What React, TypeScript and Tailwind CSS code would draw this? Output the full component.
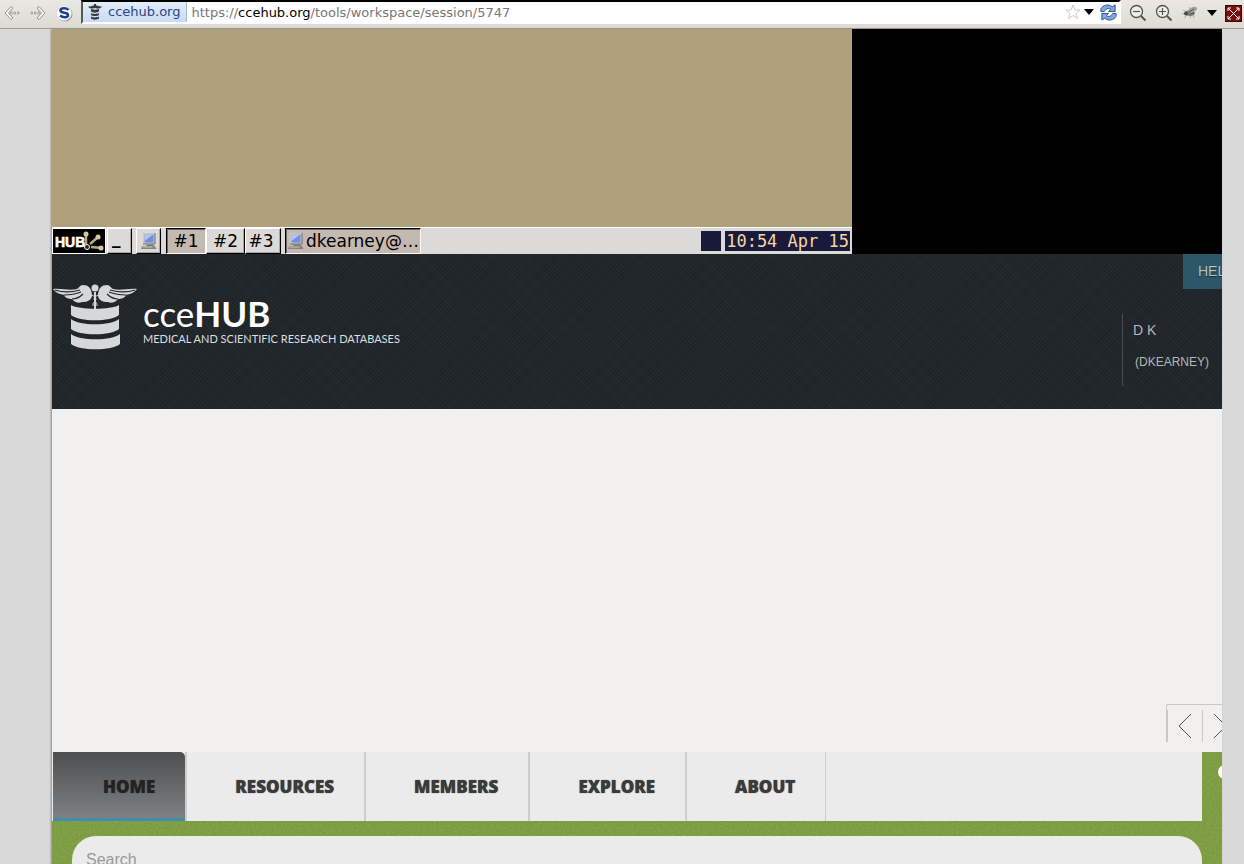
import React from "react";

const dark =
  "bg-[#20262a] bg-[repeating-linear-gradient(45deg,#ffffff06_0px,#ffffff06_1px,transparent_1px,transparent_3px),repeating-linear-gradient(-45deg,#00000018_0px,#00000018_1px,transparent_1px,transparent_3px)]";

function Computer() {
  return (
    <svg width="16" height="18" viewBox="0 0 16 18" aria-hidden="true">
      <path d="M2 1h12v11H2z" fill="#c9c8c2" />
      <path d="M14 1v11H2" fill="none" stroke="#6d6c68" />
      <path d="M3.500 2.500h9v8h-9z" fill="#6f8fe0" />
      <path d="M3.500 2.500h8.500L3.500 9z" fill="#b3c5f5" />
      <path d="M6 12.500h6l1 1.500H5z" fill="#777" />
      <path d="M1 14h13l1.500 3H0z" fill="#85847f" />
      <path d="M1.500 15h10" stroke="#c8c8c4" />
    </svg>
  );
}

function Fly() {
  return (
    <svg width="18" height="16" viewBox="0 0 18 16" aria-hidden="true">
      <path d="M2 5l4 2M1 9l5-1M3 13l4-4M9 13l1-3M13 13l-1-4M8 2l2 3" stroke="#aaa" fill="none" />
      <ellipse cx="9" cy="8" rx="5" ry="3" fill="#7d7d7d" />
      <path d="M7 6c3-5 8-5 9-3s-3 4-7 5z" fill="#a0a0a0" />
      <path d="M8 7l5-3M9 9l4-1" stroke="#555" />
      <circle cx="5" cy="8.500" r="2" fill="#4a4a4a" />
    </svg>
  );
}

function Zoom({ plus }: { plus?: boolean }) {
  return (
    <svg width="18" height="18" viewBox="0 0 18 18" fill="none" stroke="#505654" aria-hidden="true">
      <circle cx="7.500" cy="7.500" r="6" strokeWidth="1.300" fill="#efeeeb" />
      <path d={plus ? "M4 7.500h7M7.500 4v7" : "M4 7.500h7"} strokeWidth="1.200" />
      <path d="M12 12l4.500 4.500" strokeWidth="2" />
    </svg>
  );
}

function Arrow({ right }: { right?: boolean }) {
  return (
    <svg width="16" height="16" viewBox="0 0 16 16" className={right ? "rotate-180" : ""} fill="#f4f3f0" stroke="#96948f" aria-hidden="true">
      <path d="M7 1.500L1 8l6 6.500 2-1.500-4.500-5L9 3z" />
      <path d="M6 8l2-1.500v3zM10 7h1.500v2H10zM13.500 7H15v2h-1.500z" strokeWidth=".8" />
    </svg>
  );
}

function SmallStack() {
  return (
    <svg width="14" height="16" viewBox="0 0 14 16" fill="#363b3e" aria-hidden="true">
      <path d="M0 2.500C3 3 4 1 6 1.500V0h2v1.500C10 1 11 3 14 2.500 12 5 10 5 7 4 4 5 2 5 0 2.500zM3 5c3 1 5 1 8 0v2.500c-2 1.500-6 1.500-8 0zM3 9c2 1.200 6 1.200 8 0v2c-2 1.300-6 1.300-8 0zM3 12.500c2 1.200 6 1.200 8 0v2c-2 1.500-6 1.500-8 0z" />
    </svg>
  );
}

function Caret() {
  return (
    <svg width="10" height="6" viewBox="0 0 10 6" aria-hidden="true">
      <path d="M0 0h10L5 6z" />
    </svg>
  );
}

function Toolbar() {
  return (
    <div className="flex h-[29px] items-start border-b border-[#a19d95] bg-linear-to-b from-[#eae8e3] to-[#dedbd5] pl-1 font-['DejaVu_Sans',sans-serif] text-[13px]">
      <button aria-label="Back" className="mt-[5px] w-[26px]"><Arrow /></button>
      <button aria-label="Forward" className="mt-[5px] w-[26px]"><Arrow right /></button>
      <button aria-label="Extension" className="mt-[5px] mr-2">
        <svg width="17" height="17" viewBox="0 0 17 17" aria-hidden="true">
          <circle cx="9" cy="9" r="7.500" fill="#999" />
          <circle cx="8" cy="8" r="7.500" fill="#fff" stroke="#d0d0d0" strokeWidth=".6" />
          <path d="M12.500 5C10.500 2.700 4.500 2.600 4.500 5.600c0 3.200 7.500 1.200 7.500 4.400 0 3-5.500 2.600-8 .6" fill="none" stroke="#17418f" strokeWidth="2.600" />
        </svg>
      </button>
      <div className="flex h-6 flex-1 border-2 border-t-black border-r-white border-b-white border-l-[#555] bg-white">
        <span className="flex items-center gap-[6px] border-r border-[#a5bbdc] bg-linear-to-b from-[#e3edfb] to-[#cbdaf0] pr-[6px] pl-[5px] text-[#22468a]">
          <SmallStack />
          ccehub.org
        </span>
        <a href="https://ccehub.org/tools/workspace/session/5747" className="flex-1 pl-1 leading-[21px] text-[#777]">
          https://<span className="text-black">ccehub.org</span>/tools/workspace/session/5747
        </a>
        <button aria-label="Bookmark">
          <svg width="16" height="16" viewBox="0 0 16 16" fill="#fff" stroke="#ccc" aria-hidden="true">
            <path d="M8 1l2 5h5l-4 3.500 1.500 5L8 11.500l-4.500 3L5 9.500 1 6h5z" />
          </svg>
        </button>
        <button aria-label="History" className="mx-[3px]"><Caret /></button>
        <button aria-label="Reload" className="mr-[2px] ml-[3px]">
          <svg width="17" height="17" viewBox="0 0 18 18" fill="#82aadf" stroke="#28508f" aria-hidden="true">
            <path d="M1 8V5C3 1 9-.5 13 3L16 1v7H9l2.500-2.500C8.500 4 6 5 4.500 8z" />
            <path d="M17 10v3c-2 4-8 5.500-12 2L2 17v-7h7l-2.500 2.500C9.500 14 12 13 13.500 10z" />
          </svg>
        </button>
      </div>
      <div className="mt-1 mr-[2px] ml-2 flex items-center gap-2">
        <button aria-label="Zoom out"><Zoom /></button>
        <button aria-label="Zoom in"><Zoom plus /></button>
        <button aria-label="Firebug"><Fly /></button>
        <button aria-label="Firebug menu"><Caret /></button>
        <button aria-label="Exit full screen" className="bg-[#780d0d]">
          <svg width="17" height="17" viewBox="0 0 17 17" fill="none" stroke="#fff" aria-hidden="true">
            <path d="M.5 .5h16v16H.5z" stroke="#400" />
            <path d="M3 3l11 11M14 3L3 14M3 6V3h3M11 3h3v3M14 11v3h-3M6 14H3v-3" />
          </svg>
        </button>
      </div>
    </div>
  );
}

const raised = "border border-t-white border-l-white border-r-black border-b-black bg-[#dcdad8] shadow-[inset_-1px_-1px_0_#a9a6a2]";
const sunken = "border border-t-black border-l-black border-r-[#fff8ec] border-b-[#fff8ec] bg-[#c3b9b0] shadow-[inset_1px_1px_0_#6e6862]";

function Desktop() {
  return (
    <div className="bg-black">
      <div className="w-[800px]">
        <div className="h-[198px] bg-[#afa17c]" />
        <div className="flex h-[27px] items-stretch border-t border-white bg-[#dcdad9] font-['DejaVu_Sans',sans-serif] text-[17px] leading-6 text-black">
          <button aria-label="HUB" className="mr-px border border-white bg-black">
            <svg width="52" height="24" viewBox="0 0 52 24" aria-hidden="true">
              <text x="2" y="18" fill="#fff" stroke="#fff" strokeWidth=".6" fontFamily="Liberation Sans" fontWeight="bold" fontSize="14">HUB</text>
              <path d="M33 15V5M37 15l8-7M38 18l11 1" stroke="#b8aa80" strokeWidth="2.500" />
              <circle cx="33" cy="5" r="2.500" fill="#d5c9a5" />
              <circle cx="45" cy="8" r="2.500" fill="#d5c9a5" />
              <circle cx="48" cy="19" r="2.500" fill="#d5c9a5" />
              <circle cx="34" cy="18" r="2.500" fill="#222" stroke="#fff" />
            </svg>
          </button>
          <button className={`flex w-[25px] items-start pl-1 font-bold ${raised}`}><span className="leading-[18px]">_</span></button>
          <button aria-label="Terminal" className={`ml-1 flex w-[25px] items-center justify-center ${raised}`}><Computer /></button>
          <button className={`ml-[5px] w-10 ${sunken}`}>#1</button>
          <button className={`w-[39px] ${raised}`}>#2</button>
          <button className={`w-9 pr-1 ${raised}`}>#3</button>
          <button className={`ml-1 flex w-[136px] items-center gap-[2px] pl-[2px] whitespace-nowrap ${sunken}`}><Computer />dkearney@…</button>
          <span className="my-[3px] ml-auto w-5 bg-[#191a3b]" />
          <time className="my-[3px] mr-[2px] ml-1 bg-[#191a3b] px-px font-['DejaVu_Sans_Mono',monospace] leading-5 text-[#f4d6a0]">10:54 Apr 15</time>
        </div>
      </div>
    </div>
  );
}

function Logo() {
  return (
    <svg width="86" height="66" viewBox="0 0 86 66" fill="#d5d7d8" aria-hidden="true">
      <path d="M40 12C40 4 36 1 31 1c-3 0-4 3-6 4C17 7 9 4 1 5c3 4 7 5 11 6 1 3 5 4 8 4 2 3 7 5 10 3 6 0 9-2 10-6z" />
      <path d="M46 12C46 4 50 1 55 1c3 0 4 3 6 4 8 2 16-1 24 0-3 4-7 5-11 6-1 3-5 4-8 4-2 3-7 5-10 3-6 0-9-2-10-6z" />
      <path d="M3 6c9 3 18 2 25 0M12 11c6 0 12-1 17-3M20 15c4 0 8-2 11-5M83 6c-9 3-18 2-25 0M74 11c-6 0-12-1-17-3M66 15c-4 0-8-2-11-5" fill="none" stroke="#20262a" strokeWidth="1.200" />
      <circle cx="43" cy="4" r="3.500" />
      <path d="M42 8h2v18h-2z" />
      <path d="M40 11q6 3 3 6t-2 5M46 11q-6 3-3 6t2 5" stroke="#d5d7d8" fill="none" />
      <path d="M19 21c8 5 40 5 48 0v10c-8 7-40 7-48 0zM19 35c8 7 40 7 48 0v10c-8 7-40 7-48 0zM19 50c8 7 41 7 49 0v10c-8 7-41 7-49 0z" />
    </svg>
  );
}

function Header() {
  return (
    <header className={`flex h-[155px] justify-between ${dark}`}>
      <a href="#home" className="mt-[30px] flex items-start">
        <Logo />
        <span className="mt-[11px] ml-[5px] flex flex-col font-['Lato',sans-serif] text-[#dddfe0]">
          <span className="text-[35px] leading-[36px] text-white">cce<b>HUB</b></span>
          <span className="text-[11px] leading-4 whitespace-nowrap">MEDICAL AND SCIENTIFIC RESEARCH DATABASES</span>
        </span>
      </a>
      <div className="flex w-[100px] flex-col font-['Liberation_Sans',sans-serif] text-[#b4b8ba]">
        <button className="h-[35px] w-[39px] self-end overflow-hidden bg-[#2d5769] pl-[15px] text-left text-[14px] text-[#b3c2ca] text-shadow-[0_1px_1px_#0008]">HELP</button>
        <div className="mt-[25px] flex h-[72px] flex-col gap-4 border-l border-[#484d50] pl-[10px] whitespace-nowrap">
          <span className="mt-2 text-[14px] leading-4">D K</span>
          <span className="pl-[2px] text-[12px] leading-4">(DKEARNEY)</span>
        </div>
      </div>
    </header>
  );
}

const links = ["RESOURCES", "MEMBERS", "EXPLORE", "ABOUT"];

export default function App() {
  return (
    <div className="flex min-h-screen flex-col overflow-hidden bg-[#d9d9d9]">
      <Toolbar />
      <main className="mr-[22px] ml-[52px] flex flex-1 flex-col overflow-hidden bg-[#f1f0ee] shadow-[-1px_0_2px_#888]">
        <Desktop />
        <Header />
        <div className="flex h-[343px] items-end justify-end pb-[10px]">
          <div className="flex h-[38px] w-14 overflow-hidden border-t border-l border-[#c8c8c8] pt-[5px]">
            <button aria-label="Previous" className="w-9 shrink-0 border-x border-[#c8c8c8] pl-[10px]">
              <svg width="15" height="26" viewBox="0 0 15 26" fill="none" stroke="#555"><path d="M13 1L1 13l12 12" /></svg>
            </button>
            <button aria-label="Next" className="shrink-0 pl-[10px]">
              <svg width="15" height="26" viewBox="0 0 15 26" fill="none" stroke="#555"><path d="M1 1l12 12L1 25" /></svg>
            </button>
          </div>
        </div>
        <div className="relative flex-1 bg-[#7a9c40]">
          <svg className="absolute inset-0 h-full w-full" aria-hidden="true">
            <filter id="grain">
              <feTurbulence type="fractalNoise" baseFrequency=".45" numOctaves="2" />
              <feColorMatrix values="0 0 0 0 .3 0 0 0 0 .4 0 0 0 0 .1 1.200 0 0 0 -.45" />
            </filter>
            <rect width="100%" height="100%" filter="url(#grain)" />
          </svg>
          <div className="relative flex h-[69px] overflow-hidden font-['Open_Sans',sans-serif] text-[17px] font-extrabold text-[#3b3b3b] text-shadow-[0_0_1px_#3b3b3b]">
            <nav className="mr-5 flex flex-1 bg-[#ebebeb] pl-px">
              <a href="#home" className="flex items-center rounded-tr-[5px] border-b-3 border-[#3d8db0] bg-linear-to-b from-[#4e4f51] to-[#7e8183] pt-[3px] pr-[30px] pl-[50px] text-[#222]">HOME</a>
              {links.map((label) => (
                <a key={label} href={`#${label.toLowerCase()}`} className="flex items-center border-l-2 border-[#cdcdcd] pr-[30px] pl-12">{label}</a>
              ))}
              <span className="border-l border-[#cdcdcd]" />
            </nav>
            <span className="absolute top-[13px] -right-[10px] size-[14px] rounded-full bg-white" />
          </div>
          <input aria-label="Search" placeholder="Search" className="relative mt-[15px] mr-5 ml-5 block h-12 w-[calc(100%-40px)] rounded-t-[24px] bg-[#ebebeb] px-[14px] font-['Liberation_Sans',sans-serif] text-[16px] text-[#777] placeholder:text-[#999]" />
        </div>
      </main>
    </div>
  );
}
